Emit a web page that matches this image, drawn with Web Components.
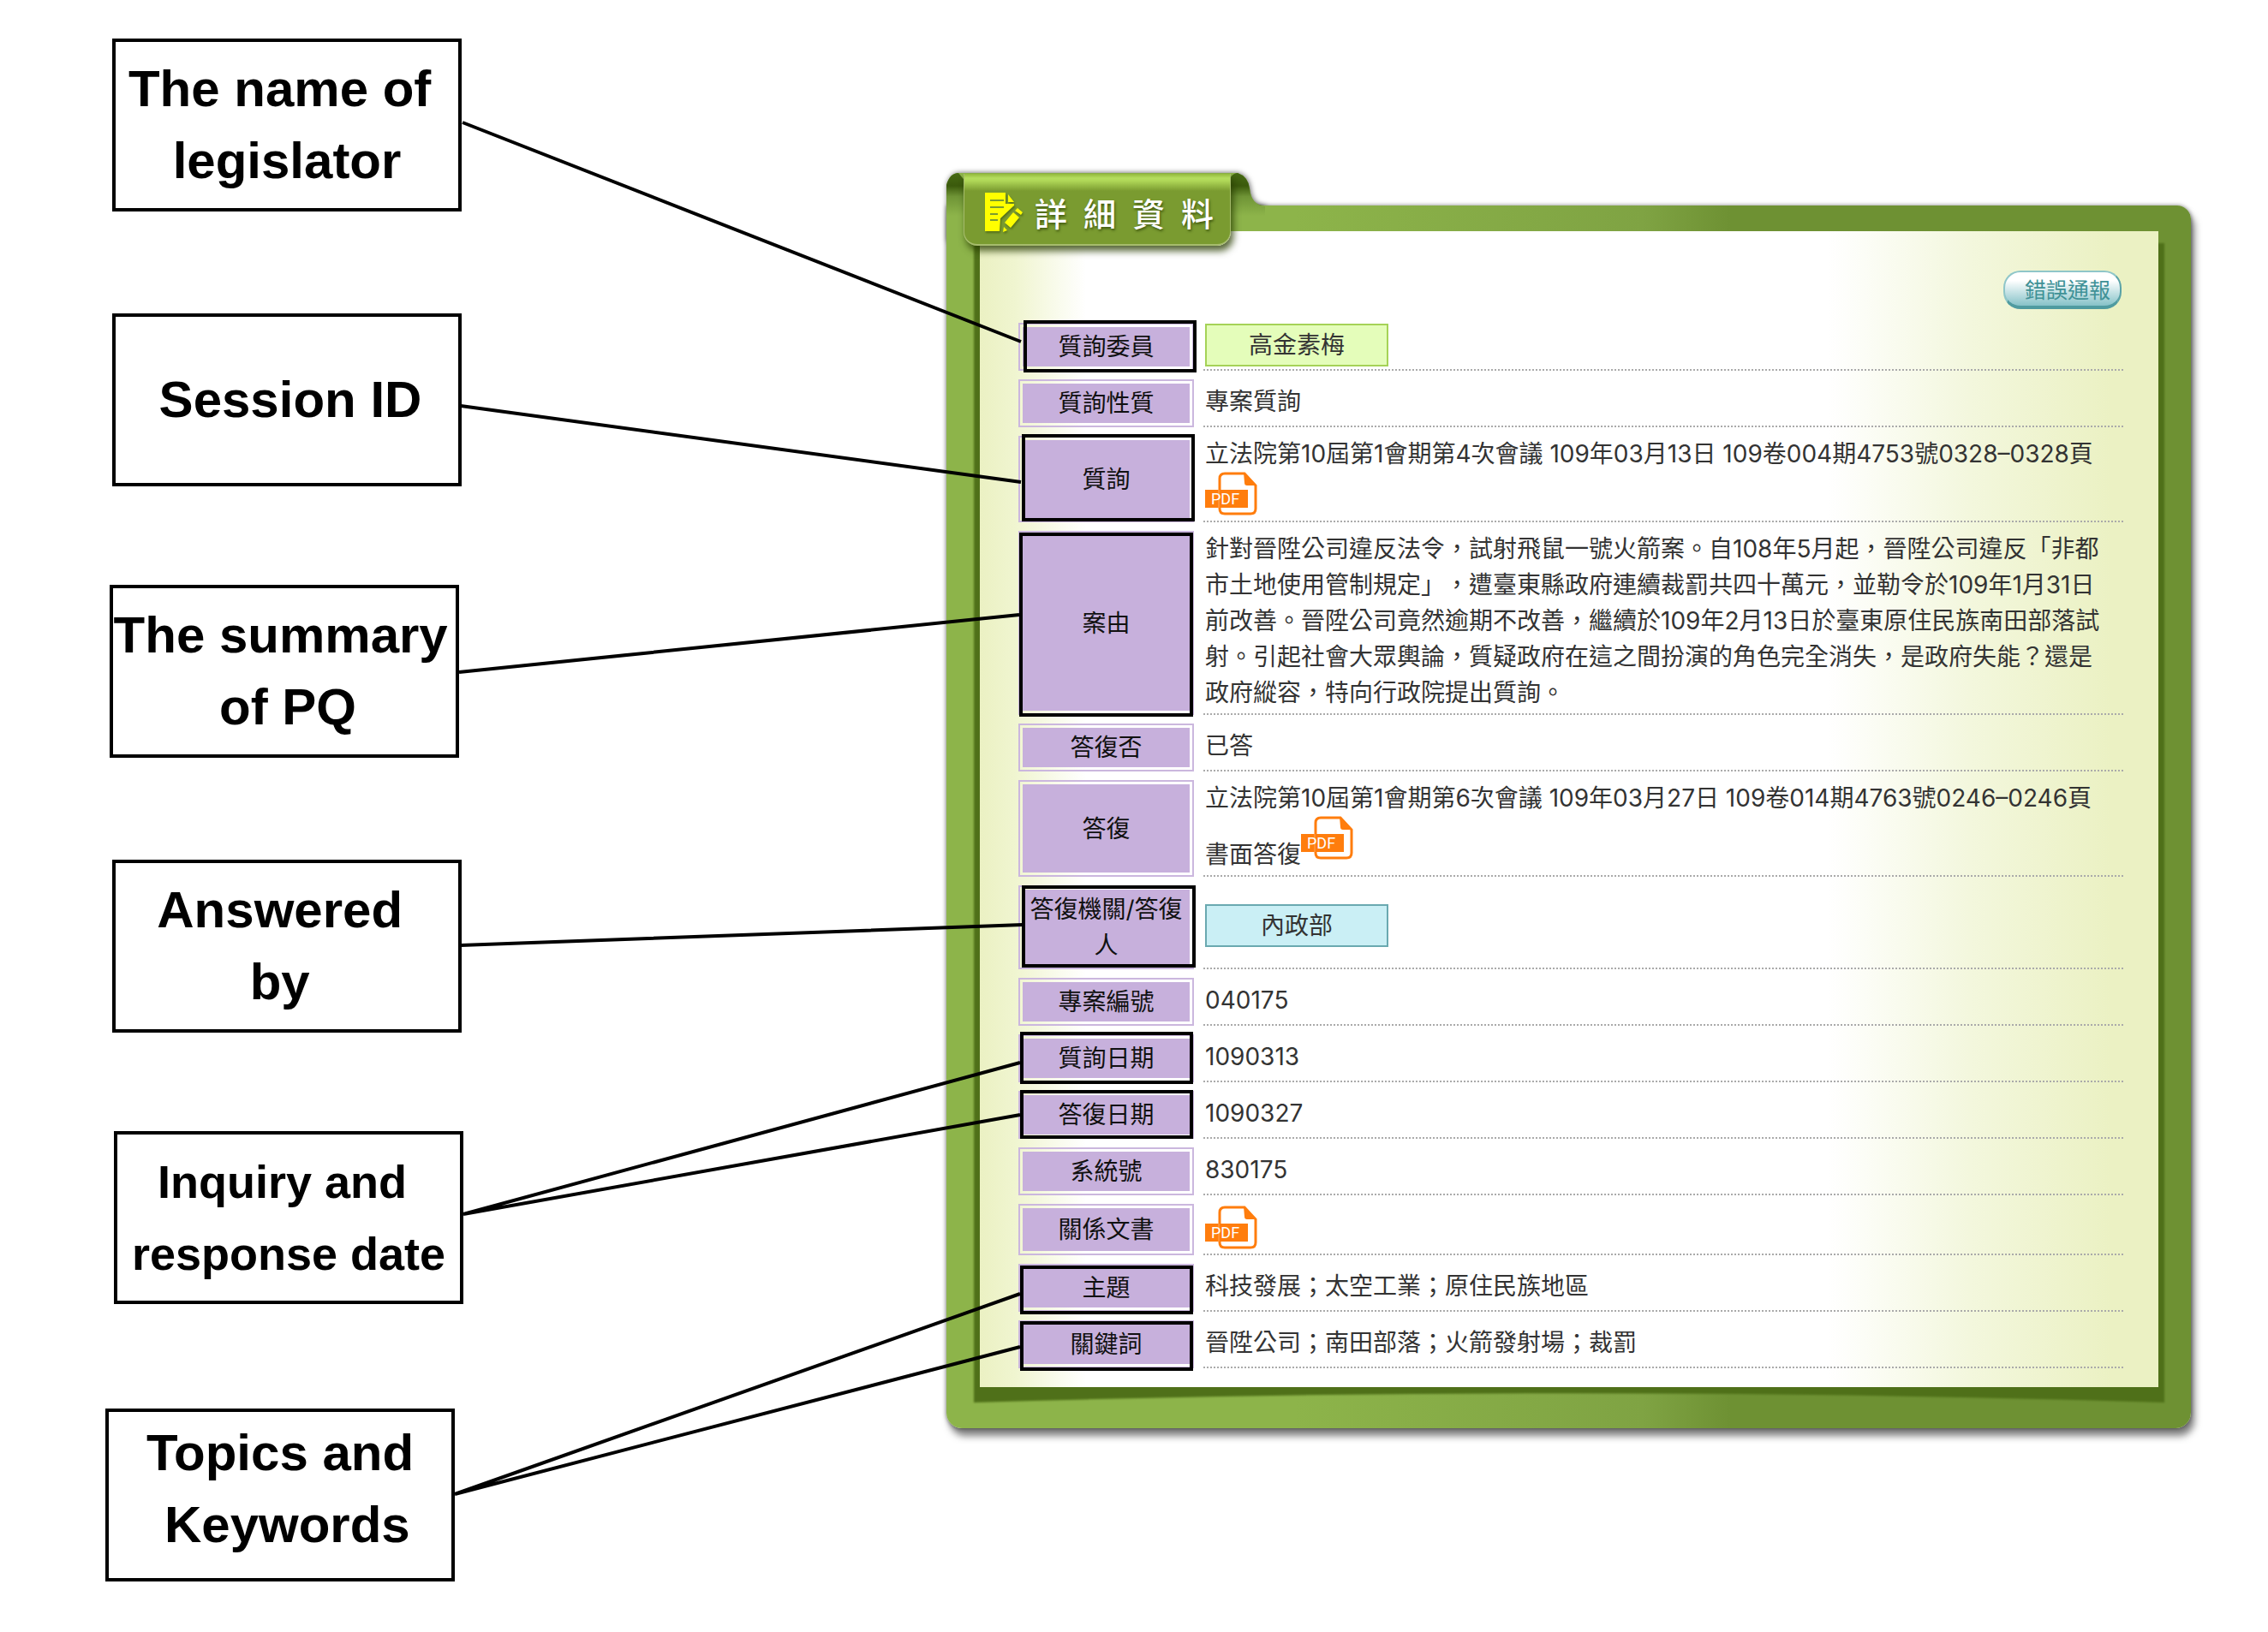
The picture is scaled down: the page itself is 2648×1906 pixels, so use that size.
<!DOCTYPE html>
<html lang="zh-Hant">
<head>
<meta charset="utf-8">
<title>詳細資料</title>
<style>
  body { margin: 0; background: #fff; font-family: Inter, "Noto Sans CJK TC", sans-serif; }
</style>
</head>
<body>
<annotated-page>
  <call-out slot="notes" style="--x:131px;--y:45px">The name of 
legislator</call-out>
  <call-out slot="notes" lead style="--x:131px;--y:366px">Session ID</call-out>
  <call-out slot="notes" lead style="--x:128px;--y:683px">The summary 
of PQ</call-out>
  <call-out slot="notes" style="--x:131px;--y:1004px">Answered 
by </call-out>
  <call-out slot="notes" small style="--x:133px;--y:1321px">Inquiry and 
response date</call-out>
  <call-out slot="notes" raised style="--x:123px;--y:1645px">Topics and
 Keywords</call-out>
  <folder-panel>
    <span slot="title">詳&#8194;細&#8194;資&#8194;料</span>
    <detail-table></detail-table>
  </folder-panel>
</annotated-page>

<script>
const define = (name, html) => {
  const t = document.createElement('template');
  t.innerHTML = html;
  customElements.define(name, class extends HTMLElement {
    constructor() {
      super();
      this.attachShadow({ mode: 'open' }).append(t.content.cloneNode(true));
    }
  });
};

define('pdf-icon', `
<style>
  :host { display: inline-block; width: 61px; height: 51px; }
  svg { display: block; }
  text { font: 400 18px Roboto, sans-serif; fill: #fff; }
</style>
<svg width="61" height="51" viewBox="0 0 61 51" role="img" aria-label="PDF">
  <path d="M23 2H46L59 16V43Q59 49 53 49H23Q17 49 17 43V8Q17 2 23 2Z" fill="#fff" stroke="#ff7d0d" stroke-width="3"/>
  <path d="M45 1L60 16H49Q46 16 46 13Z" fill="#ff7d0d"/>
  <path d="M0 21H50V42H0Z" fill="#ff7d0d"/>
  <path d="M16 21V42" stroke="#ffa75c" stroke-width="1"/>
  <text x="7" y="38">PDF</text>
</svg>`);

define('edit-icon', `
<style>:host { display: block; width: 44px; height: 46px; } svg { display: block; filter: drop-shadow(1px 2px 1px rgba(50,70,0,.5)); }</style>
<svg width="44" height="46" viewBox="0 0 44 46" aria-hidden="true">
  <path d="M0 0H24V13H34V15L18 30L17 45H0Z" fill="#ff0"/>
  <path d="M27 2L34 11H27Z" fill="#ff0"/>
  <path d="M6 9H22M6 17H22M6 25H15M6 32H15" stroke="#7a9b30" stroke-width="2"/>
  <path d="M33 23L40 29L30 41L23 35Z M38 18L44 23L42 26L35 21Z M22 40L26 44L21 46Z" fill="#ff0"/>
</svg>`);

define('name-tag', `
<style>
  :host { display: block; }
  a { box-sizing: border-box; display: block; width: 214px; border: 2px solid var(--edge); background: var(--fill);
      line-height: 46px; text-align: center; color: #333; text-decoration: none; }
</style>
<a href="#"><slot></slot></a>`);

define('call-out', `
<style>
  :host { position: absolute; left: var(--x); top: var(--y); box-sizing: border-box; width: 408px; height: 202px;
    display: flex; align-items: center; justify-content: center; border: 4px solid #000; background: #fff;
    font: 700 60px/84px "Liberation Sans", Arial, sans-serif; color: #000; white-space: pre; text-align: center; }
  :host([small]) { font-size: 54px; }
  :host([lead]) { padding-left: 8px; }
  :host([raised]) { padding-bottom: 14px; }
</style>
<span><slot></slot></span>`);

define('link-lines', `
<style>
  :host { position: absolute; inset: 0; pointer-events: none; }
  svg { display: block; width: 100%; height: 100%; overflow: visible; }
</style>
<svg fill="none" stroke="#000" stroke-width="4" aria-hidden="true">
  <path d="M540 143L1192 399M538 474L1192 563M536 785L1190 718M538 1104L1194 1080
           M541 1418L1191 1241M541 1418L1191 1302M531 1745L1191 1511M531 1745L1191 1573"/>
  <rect x="1197" y="376" width="198" height="57"/>
  <rect x="1195" y="509" width="198" height="98"/>
  <rect x="1192" y="624" width="199" height="211"/>
  <rect x="1195" y="1036" width="199" height="92"/>
  <rect x="1193" y="1207" width="198" height="57"/>
  <rect x="1193" y="1275" width="198" height="53"/>
  <rect x="1193" y="1480" width="198" height="53"/>
  <rect x="1193" y="1545" width="198" height="54"/>
</svg>`);

define('annotated-page', `
<style>
  :host { display: block; position: relative; padding: 202px 90px 216px 1105px; }
</style>
<slot></slot>
<link-lines></link-lines>
<slot name="notes"></slot>`);

define('folder-panel', `
<style>
  :host { display: block; position: relative; padding-top: 38px; }
  .back { position: absolute; left: 0; top: 0; overflow: visible; filter: drop-shadow(1px 0 3px rgba(0,0,0,.6)); }
  .frame { position: relative; padding: 30px 38px 48px 39px; border-radius: 0 16px 18px 18px;
    background: linear-gradient(90deg, #8db44a 28%, #7fa343 56%, #6e9133 63%);
    box-shadow: 0 0 5px rgba(0,0,0,.5), 4px 9px 9px rgba(0,0,0,.5); }
  .cover { position: absolute; left: 0; top: 0; }
  .body { position: relative; }
  .under { position: absolute; left: -7px; top: 14px; width: calc(100% + 14px); height: calc(100% + 4px); filter: blur(1px); }
  .paper { position: relative; padding: 46px 30px 12px 34px;
    background: linear-gradient(90deg, #ebf1c3, #f0f5d0 3%, #fff 9%, #fff 72%, #f3f7dd 84%, #ebf1c3 96%); }
  .bar { display: flex; justify-content: flex-end; padding-right: 13px; }
  button { box-sizing: border-box; height: 45px; padding: 0 11px 2px 23px; border: 2px solid #8fc6c9; border-bottom: 4px solid #4f9ba0;
    border-right-color: #5aa2a7; border-radius: 20px;
    background: linear-gradient(#fff 25%, #c5e2e5 60%, #86c2c8); color: #3f9196;
    font: 400 25px/36px "Noto Sans CJK TC", sans-serif; }
  .flap { position: absolute; left: 20px; top: 1px; box-sizing: border-box; width: 312px; height: 84px; display: flex; align-items: center; gap: 14px;
    padding: 8px 0 0 24px; border-radius: 0 0 16px 16px; border: solid #a6bc6c; border-width: 0 1px 2px;
    background: linear-gradient(#93b93c, #b4dd5e 5px, #b0d858 8px, #7a9b30 20px);
    box-shadow: 3px 6px 8px rgba(40,60,0,.8); }
  h1 { margin: 0; font: 500 38px/48px "Noto Sans CJK TC", sans-serif; color: #fff; text-shadow: 1px 2px 3px rgba(40,60,0,.7); white-space: nowrap; }
</style>
<svg class="back" width="400" height="80" aria-hidden="true">
  <path d="M0 80V14Q4 0 14 0H340Q352 4 354 18Q356 38 372 38V80Z" fill="#8db44a"/>
</svg>
<div class="frame">
  <div class="body">
    <svg class="under" viewBox="0 0 100 100" preserveAspectRatio="none" aria-hidden="true">
      <path d="M0 0H100V100Q50 98.4 0 100Z" fill="#4f7019"/>
    </svg>
    <div class="paper">
      <div class="bar"><button type="button">錯誤通報</button></div>
      <slot></slot>
    </div>
  </div>
</div>
<svg class="cover" width="400" height="68" aria-hidden="true">
  <defs><linearGradient id="curl" x1="0" y1="0" x2="0" y2="1">
    <stop offset="0" stop-color="#476a14"/><stop offset=".3" stop-color="#3b5a0c"/><stop offset=".55" stop-color="#6f9436"/><stop offset="1" stop-color="#8db44a"/>
  </linearGradient></defs>
  <path d="M0 50V14Q4 0 14 0L24 12V50Z" fill="url(#curl)"/>
  <path d="M328 50V14Q332 0 340 0Q352 4 354 18Q356 38 372 39V50Z" fill="url(#curl)"/>
</svg>
<div class="flap"><edit-icon></edit-icon><h1><slot name="title"></slot></h1></div>`);

define('detail-table', `
<style>
  :host { display: block; font-size: 28px; line-height: 42px; color: #333; text-spacing-trim: space-all; }
  table { width: 100%; border-collapse: separate; border-spacing: 11px 10px; margin-top: 6px; }
  th, td { box-sizing: border-box; height: 56px; }
  th { width: 205px; padding: 3px; border: 2px solid #cbb7de; background: #c7b0dc content-box; color: #111;
       font-weight: 400; text-align: center; }
  td { padding: 0 0 3px 2px; border-bottom: 2px dotted #aaa; white-space: nowrap; }
  a { color: inherit; }
  pdf-icon { display: block; }
  a.block { display: block; width: 61px; }
  td.paged { padding-bottom: 6px; }
  td.file { height: 60px; }
  td.two { height: 98px; }
  .mixed { display: flex; align-items: flex-start; height: 66px; }
  .mixed span { padding-top: 24px; }
  .member { --edge: #a5d257; --fill: #e4fdba; }
  .office { --edge: #6aa9b0; --fill: #caeff5; }
</style>
<table>
  <tr><th scope="row">質詢委員</th><td><name-tag class="member">高金素梅</name-tag></td></tr>
  <tr><th scope="row">質詢性質</th><td>專案質詢</td></tr>
  <tr><th scope="row">質詢</th><td class="paged">立法院第10屆第1會期第4次會議 109年03月13日 109卷004期4753號0328–0328頁<a class="block" href="#"><pdf-icon></pdf-icon></a></td></tr>
  <tr><th scope="row">案由</th><td>針對晉陞公司違反法令，試射飛鼠一號火箭案。自108年5月起，晉陞公司違反「非都<br>市土地使用管制規定」，遭臺東縣政府連續裁罰共四十萬元，並勒令於109年1月31日<br>前改善。晉陞公司竟然逾期不改善，繼續於109年2月13日於臺東原住民族南田部落試<br>射。引起社會大眾輿論，質疑政府在這之間扮演的角色完全消失，是政府失能？還是<br>政府縱容，特向行政院提出質詢。</td></tr>
  <tr><th scope="row">答復否</th><td>已答</td></tr>
  <tr><th scope="row">答復</th><td>立法院第10屆第1會期第6次會議 109年03月27日 109卷014期4763號0246–0246頁<div class="mixed"><span>書面答復</span><a href="#"><pdf-icon></pdf-icon></a></div></td></tr>
  <tr><th scope="row">答復機關/答復人</th><td class="two"><name-tag class="office">內政部</name-tag></td></tr>
  <tr><th scope="row">專案編號</th><td>040175</td></tr>
  <tr><th scope="row">質詢日期</th><td>1090313</td></tr>
  <tr><th scope="row">答復日期</th><td>1090327</td></tr>
  <tr><th scope="row">系統號</th><td>830175</td></tr>
  <tr><th scope="row">關係文書</th><td class="file"><a class="block" href="#"><pdf-icon></pdf-icon></a></td></tr>
  <tr><th scope="row">主題</th><td>科技發展；太空工業；原住民族地區</td></tr>
  <tr><th scope="row">關鍵詞</th><td>晉陞公司；南田部落；火箭發射場；裁罰</td></tr>
</table>`);
</script>
</body>
</html>
